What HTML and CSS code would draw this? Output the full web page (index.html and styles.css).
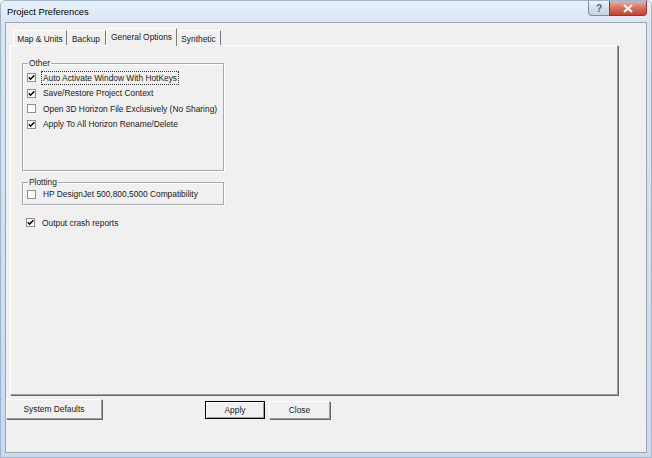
FILE: index.html
```html
<!DOCTYPE html>
<html>
<head>
<meta charset="utf-8">
<link rel="stylesheet" href="styles.css">
</head>
<body>
<div class="window">
  <div class="titlebar">
    <span class="title">Project Preferences</span>
    <div class="controls">
      <div class="ctl help">?</div>
      <div class="ctl close">
        <svg width="12" height="9" viewBox="0 0 12 9"><path d="M2 1 L10 8 M10 1 L2 8" stroke="#fff" stroke-width="2.2" fill="none"/></svg>
      </div>
    </div>
  </div>
  <div class="client">
    <div class="tabs">
      <div class="tab t1">Map &amp; Units</div>
      <div class="tab t2">Backup</div>
      <div class="tab t3 active">General Options</div>
      <div class="tab t4">Synthetic</div>
    </div>
    <div class="panel">
      <fieldset class="group other">
        <legend>Other</legend>
        <div class="rows">
          <div class="row"><span class="box on"><svg width="7" height="7" viewBox="0 0 7 7"><path d="M0.8 3.2 L2.6 5.2 L6.3 1.2" stroke="#000" stroke-width="1.5" fill="none"/></svg></span><span class="lbl focus">Auto Activate Window With HotKeys</span></div>
          <div class="row"><span class="box on"><svg width="7" height="7" viewBox="0 0 7 7"><path d="M0.8 3.2 L2.6 5.2 L6.3 1.2" stroke="#000" stroke-width="1.5" fill="none"/></svg></span><span class="lbl">Save/Restore Project Context</span></div>
          <div class="row"><span class="box"></span><span class="lbl">Open 3D Horizon File Exclusively (No Sharing)</span></div>
          <div class="row"><span class="box on"><svg width="7" height="7" viewBox="0 0 7 7"><path d="M0.8 3.2 L2.6 5.2 L6.3 1.2" stroke="#000" stroke-width="1.5" fill="none"/></svg></span><span class="lbl">Apply To All Horizon Rename/Delete</span></div>
        </div>
      </fieldset>
      <fieldset class="group plotting">
        <legend>Plotting</legend>
        <div class="row"><span class="box"></span><span class="lbl">HP DesignJet 500,800,5000 Compatibility</span></div>
      </fieldset>
      <div class="row solo"><span class="box on"><svg width="7" height="7" viewBox="0 0 7 7"><path d="M0.8 3.2 L2.6 5.2 L6.3 1.2" stroke="#000" stroke-width="1.5" fill="none"/></svg></span><span class="lbl">Output crash reports</span></div>
    </div>
    <div class="buttons">
      <div class="btn defaults">System Defaults</div>
      <div class="btn apply">Apply</div>
      <div class="btn closebtn">Close</div>
    </div>
  </div>
</div>
</body>
</html>
```
FILE: styles.css
```css
html, body {
  margin: 0;
  padding: 0;
}
body {
  width: 652px;
  height: 458px;
  overflow: hidden;
  font-family: "Liberation Sans", Arial, sans-serif;
  font-size: 8.4px;
  color: #1a1a1a;
}
.window {
  width: 652px;
  height: 458px;
  box-sizing: border-box;
  background: linear-gradient(to bottom, #e8f0f9 0px, #dae6f3 22px, #c8dbef 100%);
  border: 1px solid #9fb4cc;
  border-radius: 5px 5px 0 0;
  display: flex;
  flex-direction: column;
  padding: 0 4px 4px 4px;
}
.titlebar {
  height: 21px;
  display: flex;
  align-items: flex-start;
  flex-shrink: 0;
}
.title {
  font-size: 9.3px;
  margin-top: 6px;
  margin-left: 2px;
  color: #000;
}
.controls {
  margin-left: auto;
  display: flex;
  margin-right: 0;
}
.ctl {
  height: 15px;
  box-sizing: border-box;
  border: 1px solid #7d8ea3;
  border-top: none;
  display: flex;
  align-items: center;
  justify-content: center;
}
.help {
  width: 21px;
  border-radius: 0 0 0 4px;
  border-right: none;
  background: linear-gradient(to bottom, #eef3f9, #d6e0eb 50%, #c6d3e2);
  color: #55657a;
  font-size: 10px;
  font-weight: bold;
}
.close {
  width: 38px;
  border-radius: 0 0 4px 0;
  border-color: #8a3a30;
  background: linear-gradient(to bottom, #eab0a6, #d8705f 50%, #c4402f);
}
.client {
  flex: 1;
  background: #f0f0f0;
  border: 1px solid #9aa6b4;
  display: flex;
  flex-direction: column;
}
.tabs {
  display: flex;
  align-items: flex-end;
  height: 22px;
  margin-left: 7px;
  flex-shrink: 0;
  position: relative;
  z-index: 1;
}
.tab {
  height: 15px;
  box-sizing: border-box;
  display: flex;
  align-items: center;
  justify-content: center;
  border-left: 1px solid #fff;
  border-top: 1px solid #fff;
  border-right: 1px solid #7a7a7a;
  padding-top: 1px;
}
.t1 { width: 54px; }
.t2 { width: 39px; border-left: none; }
.t3 { width: 71px; }
.t4 { width: 44px; border-left: none; }
.tab.active {
  height: 18px;
  background: #f0f0f0;
  margin-bottom: -1px;
  padding-top: 0;
  padding-bottom: 2px;
}
.panel {
  margin-left: 4px;
  width: 608px;
  height: 350px;
  box-sizing: border-box;
  border-top: 1px solid #fff;
  border-left: 1px solid #fff;
  border-right: 1px solid #a0a0a0;
  border-bottom: 1px solid #a0a0a0;
  box-shadow: 1px 1px 0 #696969;
  padding: 12px 0 0 11px;
  display: flex;
  flex-direction: column;
  align-items: flex-start;
}
.group {
  width: 202px;
  box-sizing: border-box;
  margin: 0;
  padding: 0 0 0 4px;
  border: 1px solid #a9a9a9;
  box-shadow: inset 1px 1px 0 #fff, 1px 1px 0 #fff;
  min-width: 0;
}
.group legend {
  padding: 0 1px;
  margin-left: 1px;
  line-height: 10px;
  height: 10px;
}
.other .rows {
  padding-top: 2px;
  height: 100px;
}
.plotting {
  margin-top: 6px;
}
.plotting .row {
  height: 14px;
  margin-bottom: 3px;
}
.row {
  height: 15.5px;
  display: flex;
  align-items: center;
}
.box {
  width: 9px;
  height: 9px;
  box-sizing: border-box;
  border: 1px solid #8e8f8f;
  background: #fff;
  display: flex;
  align-items: center;
  justify-content: center;
  flex-shrink: 0;
}
.box svg { display: block; }
.lbl {
  margin-left: 5px;
  white-space: nowrap;
  padding: 1px 1px;
  border: 1px solid transparent;
}
.lbl.focus {
  border: 1px dotted #333;
}
.solo {
  margin-top: 10px;
  margin-left: 4px;
}
.buttons {
  display: flex;
  align-items: flex-start;
  margin-top: 4px;
}
.btn {
  box-sizing: border-box;
  display: flex;
  align-items: center;
  justify-content: center;
  background: #f0f0f0;
  border-top: 1px solid #fff;
  border-left: 1px solid #fff;
  border-right: 1px solid #a0a0a0;
  border-bottom: 1px solid #a0a0a0;
  box-shadow: 1px 1px 0 #696969;
}
.defaults {
  width: 96px;
  height: 20px;
}
.apply {
  width: 60px;
  height: 18px;
  margin-left: 103px;
  margin-top: 2px;
  border: 1px solid #000;
  box-shadow: inset 1px 1px 0 #fff, inset -1px -1px 0 #a0a0a0;
}
.closebtn {
  width: 61px;
  height: 18px;
  margin-left: 4px;
  margin-top: 2px;
}
```
